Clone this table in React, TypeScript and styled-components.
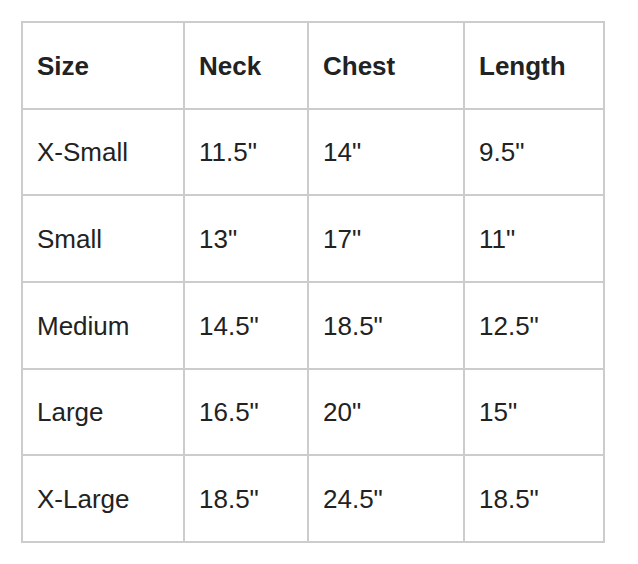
import React from "react";
import styled, { createGlobalStyle } from "styled-components";

const Global = createGlobalStyle`
  html, body { margin: 0; padding: 0; background: #fff; }
  body { font-family: "Liberation Sans", Arial, sans-serif; }
`;

const Page = styled.div`
  padding: 21px;
`;

const Table = styled.div`
  display: grid;
  grid-template-columns: 160px 122px 154px 138px;
  grid-template-rows: repeat(6, 1fr);
  gap: 2px;
  width: 584px;
  height: 522px;
  box-sizing: border-box;
  border: 2px solid #cccccc;
  background: #cccccc;
`;

const Cell = styled.div<{ $head?: boolean }>`
  background: #fff;
  display: flex;
  align-items: center;
  padding-left: 14px;
  padding-top: 2px;
  font-size: 26px;
  font-weight: ${(p) => (p.$head ? 700 : 400)};
  color: #222;
  white-space: nowrap;
`;

const header = ["Size", "Neck", "Chest", "Length"];
const rows = [
  ["X-Small", '11.5"', '14"', '9.5"'],
  ["Small", '13"', '17"', '11"'],
  ["Medium", '14.5"', '18.5"', '12.5"'],
  ["Large", '16.5"', '20"', '15"'],
  ["X-Large", '18.5"', '24.5"', '18.5"'],
];

export default function App() {
  return (
    <Page>
      <Global />
      <Table>
        {header.map((h) => (
          <Cell key={h} $head>
            {h}
          </Cell>
        ))}
        {rows.map((r) =>
          r.map((c, i) => <Cell key={r[0] + i}>{c}</Cell>)
        )}
      </Table>
    </Page>
  );
}
